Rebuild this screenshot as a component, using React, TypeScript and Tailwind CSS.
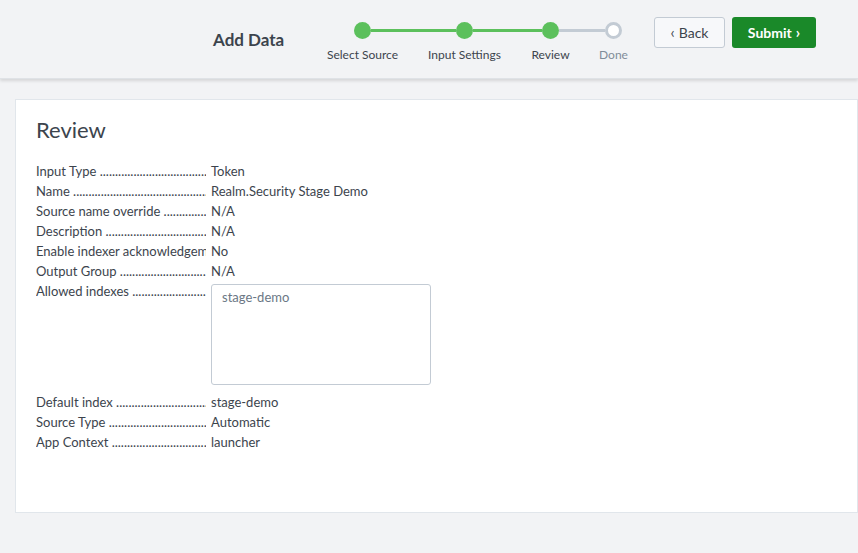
import React from "react";

const rows1 = [
  ["Input Type", "Token"],
  ["Name", "Realm.Security Stage Demo"],
  ["Source name override", "N/A"],
  ["Description", "N/A"],
  ["Enable indexer acknowledgement", "No"],
  ["Output Group", "N/A"],
];
const rows2 = [
  ["Default index", "stage-demo"],
  ["Source Type", "Automatic"],
  ["App Context", "launcher"],
];
const dots = " ..............................................................................";

function Label({ t }: { t: string }) {
  return (
    <div className="w-[170px] mr-[5px] shrink-0 overflow-hidden whitespace-nowrap">
      {t}
      {dots}
    </div>
  );
}

function Row({ l, v }: { l: string; v: string }) {
  return (
    <div className="flex h-5 items-center">
      <Label t={l} />
      <div>{v}</div>
    </div>
  );
}

function Step({ label, done, line }: { label: string; done: boolean; line?: string }) {
  return (
    <div className="relative flex flex-col items-center w-[17px]">
      <div
        className={
          "relative z-10 w-[17px] h-[17px] rounded-full " +
          (done ? "bg-[#5cc05c]" : "bg-white border-[3px] border-[#c3cbd4]")
        }
      />
      <div className={"mt-[7px] text-[12px] whitespace-nowrap " + (done ? "text-[#3c444d]" : "text-[#818d99]")}>{label}</div>
    </div>
  );
}

function Line({ w, c }: { w: string; c: string }) {
  return <div className={"h-[3px] mt-[7px] " + w + " " + c} />;
}

export default function App() {
  return (
    <div className="w-[858px] h-[553px] bg-[#f2f3f5] overflow-hidden text-[#3c444d]" style={{ fontFamily: "Lato, 'Open Sans', sans-serif" }}>
      <div className="h-[79px] bg-[#f2f3f5] shadow-[0_2px_3px_rgba(0,0,0,0.12)] border-b border-[#dfe2e6] flex items-start pt-[22px] pl-[213px]">
        <div className="text-[17px] font-bold mt-[5px] w-[141px]">Add Data</div>
        <div className="flex items-start">
          <Step label="Select Source" done />
          <Line w="w-[85px]" c="bg-[#5cc05c]" />
          <Step label="Input Settings" done />
          <Line w="w-[69px]" c="bg-[#5cc05c]" />
          <Step label="Review" done />
          <Line w="w-[46px]" c="bg-[#c3cbd4]" />
          <Step label="Done" done={false} />
        </div>
        <div className="flex gap-[7px] ml-[32px] -mt-[5px]">
          <button className="w-[71px] h-[31px] rounded-[3px] border border-[#c3cbd4] bg-[#f7f8fa] text-[14px] text-[#3c444d] flex items-center justify-center gap-1">
            <span className="text-[15px]">‹</span>Back
          </button>
          <button className="w-[84px] h-[31px] rounded-[3px] bg-[#1a8929] text-[14px] font-bold text-white flex items-center justify-center gap-1">
            Submit<span className="text-[15px]">›</span>
          </button>
        </div>
      </div>
      <div className="ml-[15px] mt-5 h-[414px] bg-white border border-[#e1e6eb] pl-5 pt-[13px] text-[13px]">
        <div className="text-[22px] mb-[16px]">Review</div>
        {rows1.map(([l, v]) => (
          <Row key={l} l={l} v={v} />
        ))}
        <div className="flex">
          <Label t="Allowed indexes" />
          <div className="w-[220px] h-[101px] mt-[2px] mb-[8px] rounded-[3px] border border-[#c3cbd4] px-[10px] pt-[3px] text-[#6b7785]">stage-demo</div>
        </div>
        {rows2.map(([l, v]) => (
          <Row key={l} l={l} v={v} />
        ))}
      </div>
    </div>
  );
}
